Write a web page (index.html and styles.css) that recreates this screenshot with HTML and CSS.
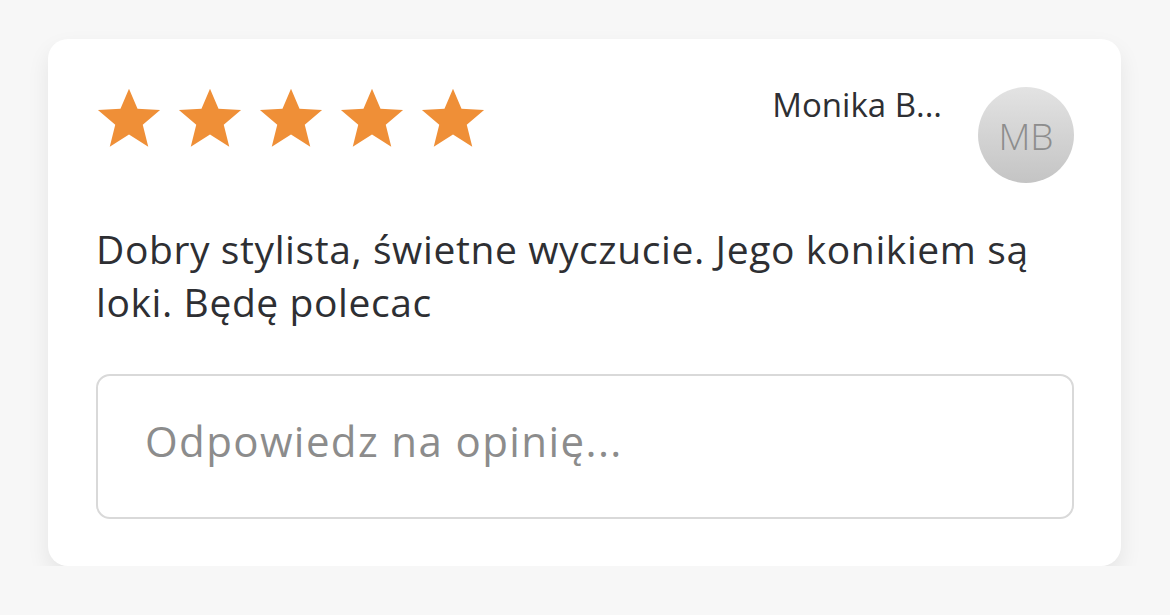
FILE: index.html
```html
<!DOCTYPE html>
<html lang="pl">
<head>
<meta charset="utf-8">
<link rel="stylesheet" href="styles.css">
</head>
<body>
<div class="card">
  <div class="header">
    <div class="stars">
      <svg class="star" viewBox="0 0 24 22"><polygon points="12,0.5 15.1,7.8 23.3,8.3 17,13.6 19,21.6 12,17.2 5,21.6 7,13.6 0.7,8.3 8.9,7.8"/></svg>
      <svg class="star" viewBox="0 0 24 22"><polygon points="12,0.5 15.1,7.8 23.3,8.3 17,13.6 19,21.6 12,17.2 5,21.6 7,13.6 0.7,8.3 8.9,7.8"/></svg>
      <svg class="star" viewBox="0 0 24 22"><polygon points="12,0.5 15.1,7.8 23.3,8.3 17,13.6 19,21.6 12,17.2 5,21.6 7,13.6 0.7,8.3 8.9,7.8"/></svg>
      <svg class="star" viewBox="0 0 24 22"><polygon points="12,0.5 15.1,7.8 23.3,8.3 17,13.6 19,21.6 12,17.2 5,21.6 7,13.6 0.7,8.3 8.9,7.8"/></svg>
      <svg class="star" viewBox="0 0 24 22"><polygon points="12,0.5 15.1,7.8 23.3,8.3 17,13.6 19,21.6 12,17.2 5,21.6 7,13.6 0.7,8.3 8.9,7.8"/></svg>
    </div>
    <div class="author">
      <span class="name">Monika B...</span>
      <div class="avatar">MB</div>
    </div>
  </div>
  <p class="text">Dobry stylista, świetne wyczucie. Jego konikiem są loki. Będę polecac</p>
  <div class="reply">Odpowiedz na opinię...</div>
</div>
</body>
</html>
```
FILE: styles.css
```css
html, body {
  margin: 0;
  padding: 0;
  background: #f7f7f7;
}
body {
  font-family: "Open Sans", "Lato", sans-serif;
  color: #2e2f33;
  padding: 39px 48px 0 48px;
}
.card {
  background: #ffffff;
  border-radius: 20px;
  box-shadow: 0 10px 22px rgba(0, 0, 0, 0.08);
  padding: 48px 47px 47px 48px;
  width: 978px;
}
.header {
  display: flex;
  justify-content: space-between;
  align-items: flex-start;
  height: 96px;
}
.stars {
  display: flex;
  gap: 15px;
}
.star {
  width: 66px;
  height: 61px;
  fill: #ef8f37;
}
.author {
  display: flex;
  align-items: flex-start;
  gap: 36px;
}
.name {
  font-size: 33px;
  line-height: 36px;
  color: #2e2f33;
}
.avatar {
  width: 96px;
  height: 96px;
  border-radius: 50%;
  background: linear-gradient(180deg, #e3e3e3 0%, #c4c4c4 100%);
  color: #8d8d8d;
  font-size: 37px;
  font-weight: 300;
  display: flex;
  align-items: center;
  justify-content: center;
}
.text {
  margin: 39px 0 0 0;
  font-size: 39px;
  line-height: 53px;
  letter-spacing: 0.6px;
  color: #2e2f33;
}
.reply {
  margin-top: 46px;
  border: 2px solid #d9d9d9;
  border-radius: 14px;
  box-sizing: border-box;
  height: 145px;
  display: flex;
  align-items: center;
  padding: 0 0 12px 47px;
  font-size: 42px;
  letter-spacing: 1.4px;
  color: #8c8c8c;
}
```
